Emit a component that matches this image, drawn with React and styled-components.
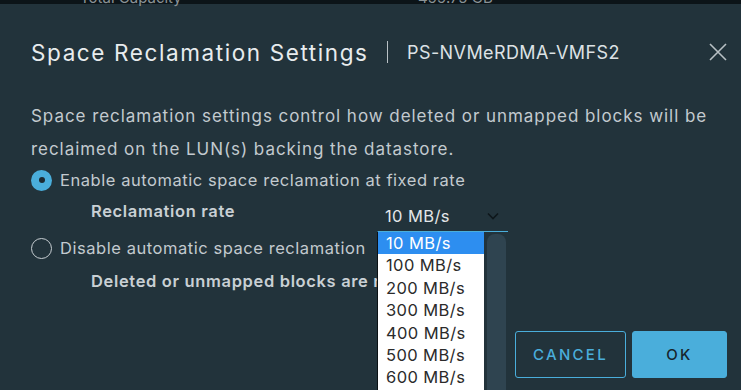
import React from "react";
import styled, { createGlobalStyle } from "styled-components";

const GlobalStyle = createGlobalStyle`
  html, body {
    margin: 0;
    padding: 0;
    background: #0c1418;
    font-family: "Inter", "Noto Sans", sans-serif;
  }
  * { box-sizing: border-box; }
`;

const Screen = styled.div`
  width: 741px;
  height: 390px;
  overflow: hidden;
  display: flex;
  flex-direction: column;
`;

const BackStrip = styled.div`
  position: relative;
  height: 4px;
  background: #0c1418;
`;

const BackText = styled.span`
  position: absolute;
  top: -12px;
  left: ${(p) => p.left}px;
  font-size: 15px;
  color: #8a9296;
`;

const Dialog = styled.div`
  flex: 1;
  background: #22333b;
  display: flex;
  flex-direction: column;
`;

const Header = styled.div`
  height: 96px;
  display: flex;
  align-items: center;
  padding: 0 11px 0 31px;
`;

const Title = styled.h1`
  margin: 0;
  font-size: 22.5px;
  font-weight: 400;
  color: #e8ecee;
  letter-spacing: 1.6px;
`;

const Divider = styled.div`
  width: 1.5px;
  height: 22px;
  background: #b9c1c5;
  margin: 0 19px 0 18px;
`;

const Subtitle = styled.span`
  font-size: 18px;
  color: #dde2e5;
  letter-spacing: 0.4px;
  flex: 1;
`;

const Close = styled.button`
  width: 24px;
  height: 24px;
  padding: 0;
  border: 0;
  background: none;
  display: flex;
  align-items: center;
  justify-content: center;
`;

const Body = styled.div`
  padding: 0 0 0 31px;
`;

const Intro = styled.p`
  margin: 0;
  font-size: 17px;
  line-height: 33px;
  color: #c3cacf;
  letter-spacing: 0.95px;
  white-space: nowrap;
`;

const RadioRow = styled.label`
  height: ${(p) => p.h}px;
  display: flex;
  align-items: center;
  gap: 8px;
  font-size: 16.5px;
  color: #c3cacf;
  letter-spacing: 0.55px;
`;

const Radio = styled.span`
  width: 21px;
  height: 21px;
  border-radius: 50%;
  flex: none;
  display: flex;
  align-items: center;
  justify-content: center;
  background: ${(p) => (p.checked ? "#4aaedb" : "transparent")};
  border: ${(p) => (p.checked ? "none" : "1.5px solid #c7ced2")};
  &::after {
    content: "";
    display: ${(p) => (p.checked ? "block" : "none")};
    width: 6px;
    height: 6px;
    border-radius: 50%;
    background: #1c2a31;
  }
`;

const RateRow = styled.div`
  height: 38px;
  display: grid;
  grid-template-columns: 286px 131px;
  padding-left: 60px;
`;

const SubLabel = styled.div`
  display: flex;
  align-items: center;
  padding-bottom: 4px;
  font-size: 16.5px;
  font-weight: 600;
  color: #c9d0d4;
  letter-spacing: 0.65px;
  white-space: nowrap;
`;

const Note = styled(SubLabel)`
  height: 34px;
  padding: 0 0 0 60px;
`;

const SelectWrap = styled.div`
  position: relative;
`;

const Select = styled.div`
  height: 100%;
  display: flex;
  align-items: center;
  justify-content: space-between;
  padding: 6px 9px 0 8px;
  border-bottom: 1px solid #4aaedb;
  font-size: 16.5px;
  color: #e2e6e8;
  letter-spacing: 0.4px;
`;

const Menu = styled.div`
  position: absolute;
  top: calc(100% - 1px);
  left: 0;
  width: 131px;
  height: 170px;
  display: flex;
  border-top: 1px solid #4aaedb;
  border-left: 1px solid #0b1114;
  z-index: 2;
`;

const Options = styled.ul`
  margin: 0;
  padding: 0;
  list-style: none;
  width: 106px;
  background: #ffffff;
`;

const Option = styled.li`
  height: 22.4px;
  line-height: 22.4px;
  padding-left: 8px;
  font-size: 16.5px;
  color: ${(p) => (p.active ? "#ffffff" : "#2b2b2b")};
  background: ${(p) => (p.active ? "#2d8ef0" : "transparent")};
  letter-spacing: 0.4px;
`;

const Track = styled.div`
  flex: 1;
  background: #22333b;
  padding: 2px 2px 0 3px;
`;

const Thumb = styled.div`
  height: 100%;
  border-radius: 8px 8px 0 0;
  background: #2f4450;
`;

const Footer = styled.div`
  display: flex;
  justify-content: flex-end;
  gap: 6px;
  padding: 33px 14px 0 0;
`;

const Button = styled.button`
  height: 47px;
  width: ${(p) => p.w}px;
  border-radius: 3px;
  font-family: inherit;
  font-size: 15px;
  font-weight: 500;
  letter-spacing: 2.3px;
  border: 1.5px solid #4aaedb;
  background: ${(p) => (p.primary ? "#4aaedb" : "transparent")};
  color: ${(p) => (p.primary ? "#17252c" : "#4aaedb")};
`;

const rates = ["10 MB/s", "100 MB/s", "200 MB/s", "300 MB/s", "400 MB/s", "500 MB/s", "600 MB/s"];

export default function App() {
  return (
    <Screen>
      <GlobalStyle />
      <BackStrip>
        <BackText left={80}>Total Capacity</BackText>
        <BackText left={418}>499.75 GB</BackText>
      </BackStrip>
      <Dialog>
        <Header>
          <Title>Space Reclamation Settings</Title>
          <Divider />
          <Subtitle>PS-NVMeRDMA-VMFS2</Subtitle>
          <Close aria-label="Close">
            <svg width="18" height="18" viewBox="0 0 18 18">
              <path d="M1 1 L17 17 M17 1 L1 17" stroke="#b8c0c4" strokeWidth="1.6" />
            </svg>
          </Close>
        </Header>
        <Body>
          <Intro>
            Space reclamation settings control how deleted or unmapped blocks will be
            <br />
            reclaimed on the LUN(s) backing the datastore.
          </Intro>
          <RadioRow h={28}>
            <Radio checked />
            Enable automatic space reclamation at fixed rate
          </RadioRow>
          <RateRow>
            <SubLabel>Reclamation rate</SubLabel>
            <SelectWrap>
              <Select>
                10 MB/s
                <svg width="12" height="8" viewBox="0 0 12 8">
                  <path d="M1 1.5 L6 6.5 L11 1.5" fill="none" stroke="#0e171b" strokeWidth="1.6" />
                </svg>
              </Select>
              <Menu>
                <Options>
                  {rates.map((r, i) => (
                    <Option key={r} active={i === 0}>
                      {r}
                    </Option>
                  ))}
                </Options>
                <Track>
                  <Thumb />
                </Track>
              </Menu>
            </SelectWrap>
          </RateRow>
          <RadioRow h={32}>
            <Radio />
            Disable automatic space reclamation
          </RadioRow>
          <Note>Deleted or unmapped blocks are not reclaimed.</Note>
        </Body>
        <Footer>
          <Button w={111}>CANCEL</Button>
          <Button w={95} primary>
            OK
          </Button>
        </Footer>
      </Dialog>
    </Screen>
  );
}
